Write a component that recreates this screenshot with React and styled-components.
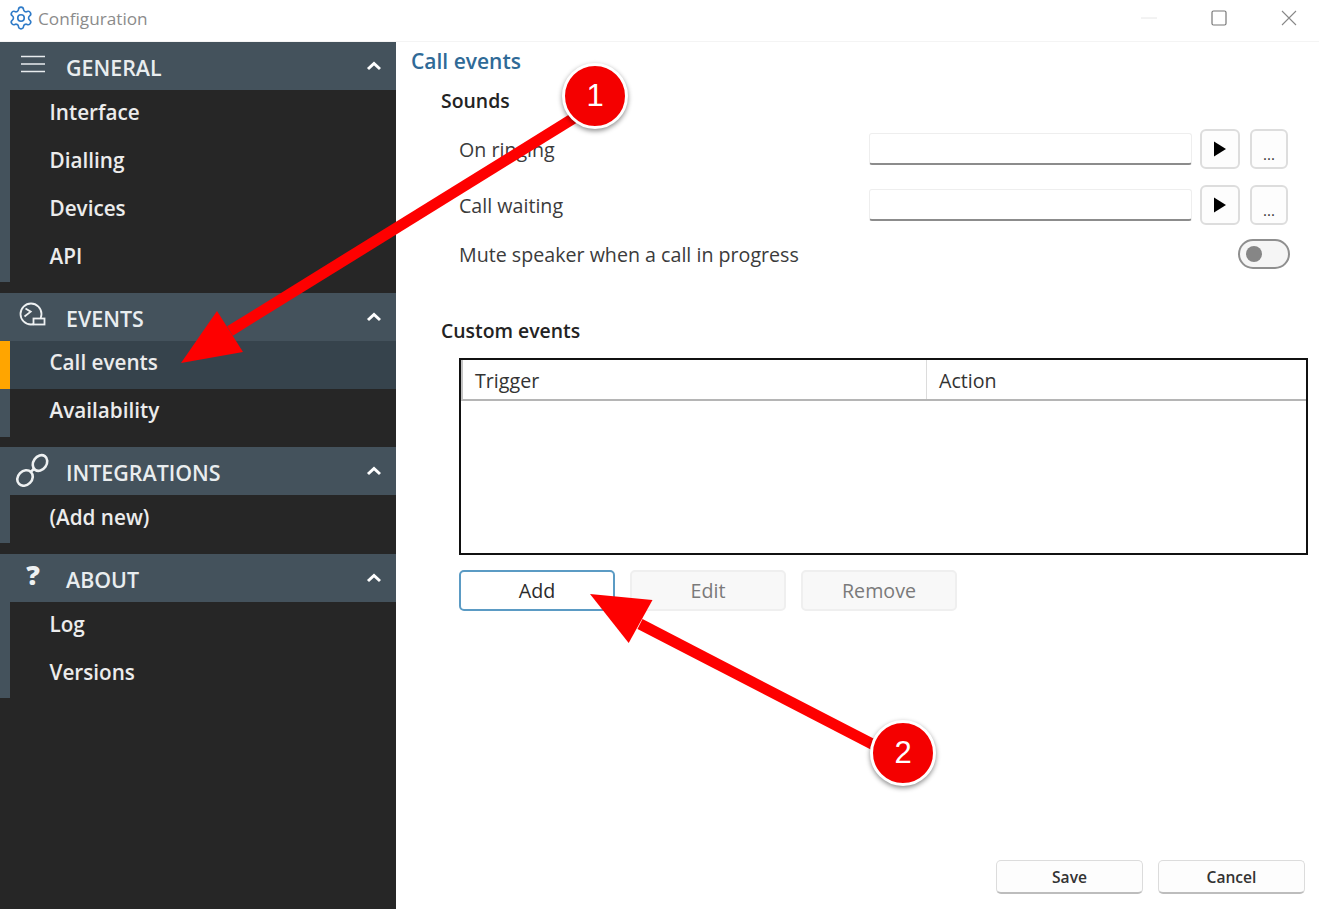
import React from 'react';
import styled, { createGlobalStyle } from 'styled-components';
import { Settings } from 'lucide-react';

const Global = createGlobalStyle`
  html, body { margin: 0; padding: 0; background: #fff; }
  body { font-family: "Open Sans", "Noto Sans", sans-serif; }
`;

const Window = styled.div`
  position: relative;
  width: 1319px;
  height: 909px;
  overflow: hidden;
  display: flex;
  flex-direction: column;
  background: #fff;
`;

const TitleBar = styled.header`
  height: 42px;
  flex: none;
  box-sizing: border-box;
  display: flex;
  align-items: center;
  padding: 0 22px 5px 8px;
  border-bottom: 1px solid #f4f4f4;
`;

const AppTitle = styled.span`
  margin-left: 4px;
  font-size: 17.2px;
  color: #8b8b8b;
  flex: 1;
`;

const WinControls = styled.div`
  display: flex;
  align-items: center;
  gap: 54px;
  color: #888;
`;

const Body = styled.div`
  flex: 1;
  display: flex;
  min-height: 0;
`;

const Sidebar = styled.nav`
  width: 396px;
  flex: none;
  background: #262626;
`;

const Group = styled.section`
  margin-bottom: 10.67px;
`;

const GroupHeader = styled.div`
  height: 48px;
  display: flex;
  align-items: center;
  background: #44525c;
  color: #e9edef;
  font-size: 21.4px;
  font-weight: 600;
`;

const IconSlot = styled.span`
  width: 66px;
  flex: none;
  display: flex;
  justify-content: center;
  margin-top: -4px;
`;

const GroupLabel = styled.span`
  flex: 1;
  margin-top: 3px;
`;

const Chevron = styled.svg`
  width: 16px;
  height: 10px;
  margin-right: 14px;
`;

const QuestionMark = styled.span`
  font-size: 27px;
  font-weight: 800;
  line-height: 1;
  color: #eef1f2;
  margin-top: -3px;
`;

const Item = styled.div`
  height: 48px;
  box-sizing: border-box;
  display: flex;
  align-items: center;
  padding: 0 0 4.5px 39.5px;
  border-left: 10.5px solid ${(p) => (p.$active ? '#ffa500' : '#44525c')};
  background: ${(p) => (p.$active ? '#36434c' : 'transparent')};
  color: #ececec;
  font-size: 20.7px;
  font-weight: 600;
`;

const Main = styled.main`
  flex: 1;
  min-width: 0;
  display: flex;
  flex-direction: column;
  padding: 0 14px 15px 15px;
`;

const PageTitle = styled.h1`
  margin: 0;
  height: 38px;
  line-height: 38px;
  font-size: 21px;
  font-weight: 600;
  color: #2f6a97;
`;

const SectionTitle = styled.h2`
  margin: 0;
  padding-left: 30px;
  height: ${(p) => p.$h}px;
  line-height: ${(p) => p.$lh}px;
  font-size: 19.4px;
  font-weight: 600;
  color: #232323;
`;

const Row = styled.div`
  height: ${(p) => p.$h}px;
  display: flex;
  align-items: center;
  padding: 0 17px 0 48px;
`;

const RowLabel = styled.span`
  flex: 1;
  font-size: 19.65px;
  color: #3b3b3b;
`;

const PathField = styled.div`
  width: 323px;
  height: 32px;
  box-sizing: border-box;
  border: 1px solid #eeeeee;
  border-bottom: 2px solid #8c8c8c;
  border-radius: 3px;
  background: #fff;
`;

const SquareButton = styled.button`
  width: ${(p) => p.$w}px;
  height: 40px;
  margin-left: ${(p) => p.$ml}px;
  box-sizing: border-box;
  padding: 0;
  display: flex;
  align-items: center;
  justify-content: center;
  border: 2px solid #dddddd;
  border-radius: 6px;
  background: #fdfdfd;
  color: #333;
  font-family: inherit;
`;

const Dots = styled.span`
  font-size: 15px;
  line-height: 1;
  margin-top: 11px;
`;

const Toggle = styled.div`
  width: 52px;
  height: 30px;
  box-sizing: border-box;
  margin-right: -2px;
  padding-left: 6px;
  display: flex;
  align-items: center;
  border: 2px solid #8f8f8f;
  border-radius: 15px;
  background: #f5f5f5;
`;

const Knob = styled.span`
  width: 16px;
  height: 16px;
  border-radius: 50%;
  background: #868686;
`;

const Table = styled.div`
  margin-left: 48px;
  width: 849px;
  height: 197px;
  box-sizing: border-box;
  border: 2px solid #111;
`;

const TableHead = styled.div`
  height: 41px;
  box-sizing: border-box;
  display: grid;
  grid-template-columns: 463px 1fr;
  border-bottom: 2px solid #b5b5b5;
  border-left: 2px solid #c4c4c4;
`;

const HeadCell = styled.div`
  display: flex;
  align-items: center;
  padding: 2px 0 0 ${(p) => p.$pl}px;
  font-size: 19.65px;
  color: #333;
  & + & { border-left: 1px solid #dcdcdc; }
`;

const ActionBar = styled.div`
  display: flex;
  gap: 15px;
  margin: 15px 0 0 48px;
`;

const ActionButton = styled.button`
  width: 156px;
  height: 41px;
  box-sizing: border-box;
  padding: 0;
  border-radius: 5px;
  border: ${(p) => (p.$primary ? '2px solid #5b9bc4' : '2px solid #efefef')};
  background: ${(p) => (p.$primary ? '#fff' : '#f8f8f8')};
  color: ${(p) => (p.$primary ? '#2b2b2b' : '#7a7a7a')};
  font-family: inherit;
  font-size: 19.65px;
`;

const Footer = styled.div`
  margin-top: auto;
  display: flex;
  justify-content: flex-end;
  gap: 15px;
`;

const FooterButton = styled.button`
  width: 147px;
  height: 34px;
  box-sizing: border-box;
  padding: 0;
  border: 1px solid #dcdcdc;
  border-bottom: 2px solid #bdbdbd;
  border-radius: 5px;
  background: #fdfdfd;
  color: #333;
  font-family: inherit;
  font-size: 15.6px;
  font-weight: 600;
`;

const ArrowLayer = styled.svg`
  position: absolute;
  inset: 0;
  width: 1319px;
  height: 909px;
  pointer-events: none;
`;

const Badge = styled.div`
  position: absolute;
  left: ${(p) => p.$x - 33}px;
  top: ${(p) => p.$y - 33}px;
  width: 66px;
  height: 66px;
  box-sizing: border-box;
  display: flex;
  align-items: center;
  justify-content: center;
  border: 3px solid #fff;
  border-radius: 50%;
  background: #f40000;
  box-shadow: 0 2px 5px rgba(0, 0, 0, 0.45);
  color: #fff;
  font-family: "Liberation Sans", Arial, sans-serif;
  font-size: 31px;
`;

const ChevronUp = () => (
  <Chevron viewBox="0 0 16 10">
    <path d="M2 8 L8 2.5 L14 8" fill="none" stroke="#fff" strokeWidth="3" />
  </Chevron>
);

const MenuIcon = () => (
  <svg width="26" height="18" viewBox="0 0 26 18" stroke="#e8ecee" strokeWidth="1.4">
    <path d="M1 1.5H25M1 9H25M1 16.5H25" />
  </svg>
);

const EventsIcon = () => (
  <svg width="28" height="28" viewBox="0 0 28 28" fill="none" stroke="#eef1f2" strokeWidth="1.8">
    <circle cx="12" cy="13" r="10.5" />
    <path d="M6.5 7.5 L11.7 10.7 L5.5 15.5" />
    <rect x="14.5" y="17.5" width="11" height="6" fill="#44525c" />
  </svg>
);

const LinkIcon = () => (
  <svg width="36" height="36" viewBox="0 0 36 36" fill="none" stroke="#eef1f2" strokeWidth="2.6">
    <ellipse cx="10" cy="27" rx="8.4" ry="7" transform="rotate(-45 10 27)" />
    <ellipse cx="25" cy="12" rx="8.4" ry="6.6" transform="rotate(-55 25 12)" />
    <path d="M15.5 21 L19.5 17.5" />
  </svg>
);

const PlayIcon = () => (
  <svg width="14" height="16" viewBox="0 0 14 16">
    <path d="M1 0.5 L13 8 L1 15.5 Z" fill="#000" />
  </svg>
);

const groups = [
  { name: 'GENERAL', icon: <MenuIcon />, items: ['Interface', 'Dialling', 'Devices', 'API'] },
  { name: 'EVENTS', icon: <EventsIcon />, items: ['Call events', 'Availability'], active: 'Call events' },
  { name: 'INTEGRATIONS', icon: <LinkIcon />, items: ['(Add new)'] },
  { name: 'ABOUT', icon: <QuestionMark>?</QuestionMark>, items: ['Log', 'Versions'] },
];

const soundRows = [
  { label: 'On ringing', h: 56 },
  { label: 'Call waiting', h: 56 },
];

export default function App() {
  return (
    <Window>
      <Global />
      <TitleBar>
        <Settings size={26} color="#2f7bc8" strokeWidth={1.5} />
        <AppTitle>Configuration</AppTitle>
        <WinControls>
          <svg width="16" height="2" viewBox="0 0 16 2"><path d="M0 1H16" stroke="#e6e6e6" /></svg>
          <svg width="16" height="16" viewBox="0 0 16 16" fill="none">
            <rect x="1" y="1" width="14" height="14" rx="1.5" stroke="#777" strokeWidth="1.2" />
          </svg>
          <svg width="16" height="16" viewBox="0 0 16 16" fill="none">
            <path d="M1 1 L15 15 M15 1 L1 15" stroke="#888" strokeWidth="1.1" />
          </svg>
        </WinControls>
      </TitleBar>
      <Body>
        <Sidebar>
          {groups.map((g) => (
            <Group key={g.name}>
              <GroupHeader>
                <IconSlot>{g.icon}</IconSlot>
                <GroupLabel>{g.name}</GroupLabel>
                <ChevronUp />
              </GroupHeader>
              {g.items.map((it) => (
                <Item key={it} $active={it === g.active}>{it}</Item>
              ))}
            </Group>
          ))}
        </Sidebar>
        <Main>
          <PageTitle>Call events</PageTitle>
          <SectionTitle $h={41} $lh={41}>Sounds</SectionTitle>
          {soundRows.map((r) => (
            <Row key={r.label} $h={r.h}>
              <RowLabel>{r.label}</RowLabel>
              <PathField />
              <SquareButton $w={40} $ml={8}><PlayIcon /></SquareButton>
              <SquareButton $w={38} $ml={10}><Dots>...</Dots></SquareButton>
            </Row>
          ))}
          <Row $h={42}>
            <RowLabel>Mute speaker when a call in progress</RowLabel>
            <Toggle><Knob /></Toggle>
          </Row>
          <SectionTitle $h={83} $lh={112}>Custom events</SectionTitle>
          <Table>
            <TableHead>
              <HeadCell $pl={12}>Trigger</HeadCell>
              <HeadCell $pl={12}>Action</HeadCell>
            </TableHead>
          </Table>
          <ActionBar>
            <ActionButton $primary>Add</ActionButton>
            <ActionButton>Edit</ActionButton>
            <ActionButton>Remove</ActionButton>
          </ActionBar>
          <Footer>
            <FooterButton>Save</FooterButton>
            <FooterButton>Cancel</FooterButton>
          </Footer>
        </Main>
      </Body>
      <ArrowLayer viewBox="0 0 1319 909">
        <path d="M230 331 L595 105" stroke="#fe0000" strokeWidth="11" />
        <path d="M181 363 L217 311 L243 352 Z" fill="#fe0000" />
        <path d="M640 624 L903 760" stroke="#fe0000" strokeWidth="11" />
        <path d="M590 594 L652.5 600 L628.7 643 Z" fill="#fe0000" />
      </ArrowLayer>
      <Badge $x={595} $y={96}>1</Badge>
      <Badge $x={903} $y={753}>2</Badge>
    </Window>
  );
}
